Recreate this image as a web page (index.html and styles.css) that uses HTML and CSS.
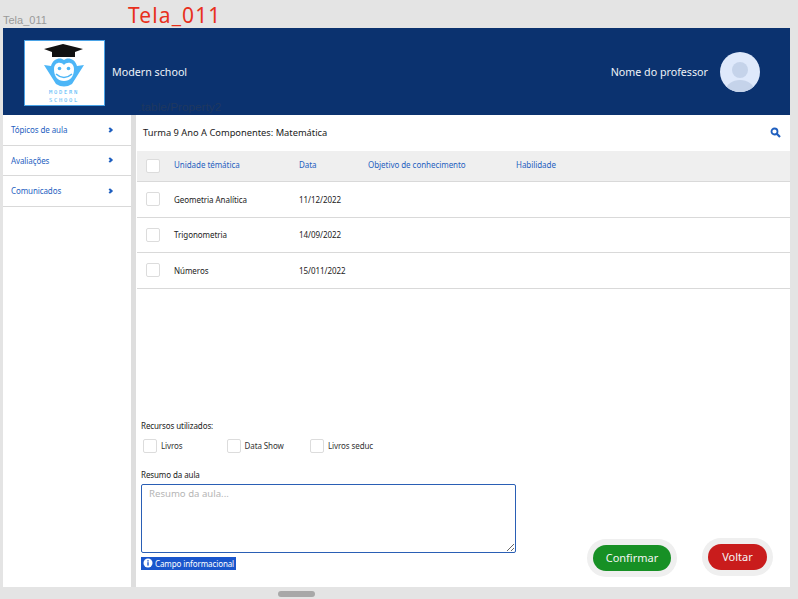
FILE: index.html
```html
<!DOCTYPE html>
<html lang="en">
<head>
  <meta charset="UTF-8" />
  <title>Tela_011</title>
  <link rel="stylesheet" href="styles.css">
</head>
<body>

  <div class="labels">
    <span class="frame-name">Tela_011</span>
    <span class="frame-title">Tela_011</span>
  </div>

  <div class="screen">
    <header class="header">
      <div class="logo">
        <svg width="79" height="64" viewBox="0 0 79 64">
          <polygon points="19,8 38,3 58,8 50,11 50,16 27,16 27,11" fill="#111"/>
          <path d="M19 24 L26 25 C28 17 36 16 39 19 C42 16 50 17 52 25 L59 24 L47 43 Q39 48 31 43 Z" fill="#4db6f7"/>
          <path d="M29 28 C29 21 36 20 39 24 C42 20 49 21 49 28 C49 36 45 40 39 40 C33 40 29 36 29 28 Z" fill="#fff"/>
          <circle cx="34.5" cy="27.5" r="1.8" fill="#4db6f7"/>
          <circle cx="43.5" cy="27.5" r="1.8" fill="#4db6f7"/>
          <path d="M31 33 Q39 40 47 33" fill="none" stroke="#4db6f7" stroke-width="1.6"/>
          <text x="39" y="53" class="logo-text" text-anchor="middle">MODERN</text>
          <text x="39" y="60.5" class="logo-text" text-anchor="middle">SCHOOL</text>
        </svg>
      </div>
      <span class="school">Modern school</span>
      <span class="teacher">Nome do professor</span>
      <svg class="avatar" width="40" height="40" viewBox="0 0 40 40">
        <defs><clipPath id="av"><circle cx="20" cy="20" r="20"/></clipPath></defs>
        <circle cx="20" cy="20" r="20" fill="#dfe9fb"/>
        <g clip-path="url(#av)" fill="#c5d3ea">
          <circle cx="20" cy="18" r="8"/>
          <ellipse cx="20" cy="38" rx="14" ry="10"/>
        </g>
      </svg>
    </header>
    <span class="prop-label">.table/Property2</span>

    <div class="main">
      <nav class="side">
        <a class="side-item">Tópicos de aula <b class="chev"></b></a>
        <a class="side-item">Avaliações <b class="chev"></b></a>
        <a class="side-item">Comunicados <b class="chev"></b></a>
      </nav>

      <section class="content">
        <div class="title-row">
          <span>Turma 9 Ano A Componentes: Matemática</span>
          <svg width="11" height="11" viewBox="0 0 11 11" fill="none" stroke="#1f5fbf">
            <circle cx="4.5" cy="4.5" r="3" stroke-width="1.8"/>
            <line x1="6.8" y1="6.8" x2="10" y2="10" stroke-width="2.2"/>
          </svg>
        </div>

        <div class="row head">
          <i class="check"></i>
          <span class="c1">Unidade témática</span>
          <span class="c2">Data</span>
          <span class="c3">Objetivo de conhecimento</span>
          <span class="c4">Habilidade</span>
        </div>
        <div class="row">
          <i class="check"></i>
          <span class="c1">Geometria Analítica</span>
          <span class="c2">11/12/2022</span>
        </div>
        <div class="row">
          <i class="check"></i>
          <span class="c1">Trigonometria</span>
          <span class="c2">14/09/2022</span>
        </div>
        <div class="row">
          <i class="check"></i>
          <span class="c1">Números</span>
          <span class="c2">15/011/2022</span>
        </div>

        <div class="form">
          <p class="caption">Recursos utilizados:</p>
          <div class="options">
            <label class="option"><i class="check"></i>Livros</label>
            <label class="option"><i class="check"></i>Data Show</label>
            <label class="option"><i class="check"></i>Livros seduc</label>
          </div>
          <p class="caption">Resumo da aula</p>
          <textarea class="summary" placeholder="Resumo da aula..."></textarea>
          <div class="bottom">
            <span class="info">
              <svg width="10" height="10" viewBox="0 0 10 10">
                <circle cx="5" cy="5" r="4.5" fill="#fff"/>
                <rect x="4.3" y="4.2" width="1.4" height="3.4" fill="#1a56cc"/>
                <rect x="4.3" y="2.2" width="1.4" height="1.3" fill="#1a56cc"/>
              </svg>
              Campo informacional
            </span>
            <div class="actions">
              <button class="btn green">Confirmar</button>
              <button class="btn red">Voltar</button>
            </div>
          </div>
        </div>
      </section>
    </div>
  </div>

  <div class="scrollbar"><span class="thumb"></span></div>

</body>
</html>
```

FILE: styles.css
```css
* {
  box-sizing: border-box;
}

body {
  margin: 0;
  height: 599px;
  overflow: hidden;
  background: #e4e4e4;
  font-family: "Noto Sans", sans-serif;
  color: #222;
}

.labels {
  height: 28px;
  display: flex;
  padding-left: 3px;
}

.frame-name {
  width: 125px;
  padding-top: 13px;
  font-family: "Liberation Sans", sans-serif;
  font-size: 11px;
  line-height: 14px;
  color: #9a9a9a;
}

.frame-title {
  font-size: 21px;
  line-height: 28px;
  letter-spacing: 1.1px;
  color: #e8301c;
  margin-top: 1px;
}

.screen {
  position: relative;
  width: 787px;
  height: 559px;
  margin-left: 3px;
  background: #fff;
  display: flex;
  flex-direction: column;
}

.header {
  height: 87px;
  flex: none;
  background: #0b326f;
  display: flex;
  align-items: center;
  padding: 0 30px 0 21px;
  color: #eef2f8;
  font-size: 10.7px;
}

.logo {
  width: 81px;
  height: 66px;
  background: #fff;
  border: 1px solid #4aa3e6;
  margin-top: 2px;
}

.logo svg {
  display: block;
}

.logo-text {
  font-family: "DejaVu Sans Mono", monospace;
  font-size: 5.5px;
  letter-spacing: 1.7px;
  fill: #4db6f7;
}

.school {
  margin-left: 7px;
  flex: 1;
}

.avatar {
  margin-left: 12px;
}

.prop-label {
  position: absolute;
  left: 135px;
  top: 72px;
  font-family: "Liberation Sans", sans-serif;
  font-size: 11.8px;
  color: #1f3860;
}

.main {
  flex: 1;
  display: flex;
  min-height: 0;
}

.side {
  width: 128px;
  flex: none;
}

.side-item {
  height: 30.5px;
  display: flex;
  align-items: center;
  justify-content: space-between;
  padding: 0 19px 0 8px;
  border-bottom: 1px solid #d9d9d9;
  font-size: 8px;
  letter-spacing: -0.1px;
  color: #1f5fbf;
}

.chev {
  width: 4px;
  height: 4px;
  border-top: 2px solid #1f5fbf;
  border-right: 2px solid #1f5fbf;
  transform: rotate(45deg);
}

.content {
  flex: 1;
  display: flex;
  flex-direction: column;
  border-left: 5px solid #dedede;
  padding-left: 1px;
  min-width: 0;
}

.title-row {
  height: 36px;
  display: flex;
  align-items: center;
  justify-content: space-between;
  padding: 0 9px 2px 6px;
  font-size: 9.3px;
  color: #1a1a1a;
}

.row {
  height: 35.5px;
  display: flex;
  align-items: center;
  padding-left: 9px;
  border-bottom: 1px solid #d9d9d9;
  font-size: 8px;
  letter-spacing: -0.05px;
}

.row.head {
  height: 31px;
  background: #efefef;
  color: #1f5fbf;
  padding-bottom: 3px;
}

.head .check {
  margin-top: 3px;
}

.check {
  width: 14px;
  height: 14px;
  flex: none;
  background: #fff;
  border: 1px solid #dcdcdc;
  border-radius: 2px;
}

.c1 {
  margin-left: 14px;
  width: 125px;
}

.c2 {
  width: 69px;
}

.c3 {
  width: 148px;
}

.form {
  flex: 1;
  padding: 131px 0 0 4px;
  display: flex;
  flex-direction: column;
}

.caption {
  margin: 0;
  font-size: 8px;
  letter-spacing: -0.1px;
  line-height: 12px;
}

.options {
  display: flex;
  margin: 7px 0 16px 2px;
}

.option {
  width: 83.5px;
  display: flex;
  align-items: center;
  gap: 4px;
  font-size: 8px;
  letter-spacing: -0.1px;
  color: #333;
}

.summary {
  display: block;
  width: 375px;
  height: 69px;
  margin-top: 3px;
  padding: 2px 7px;
  border: 1.5px solid #2a5fb5;
  border-radius: 2px;
  background: #fff;
  font-family: inherit;
  font-size: 9.6px;
}

.summary::placeholder {
  color: #b5b5b5;
}

.bottom {
  display: flex;
  justify-content: space-between;
  align-items: flex-start;
  padding-right: 23px;
}

.info {
  display: inline-flex;
  align-items: center;
  gap: 2px;
  height: 13px;
  margin-top: 4px;
  padding: 0 2px;
  background: #1a56cc;
  color: #fff;
  font-size: 8px;
  letter-spacing: -0.1px;
}

.actions {
  display: flex;
  gap: 37px;
  margin-top: -8px;
}

.btn {
  height: 26px;
  border: none;
  border-radius: 13px;
  box-shadow: 0 0 0 6px #efefef;
  color: #f4f4f4;
  font-family: inherit;
  font-size: 11px;
  padding: 0;
}

.green {
  width: 78px;
  background: #179025;
}

.red {
  width: 59px;
  background: #c91c1c;
  margin-top: -1px;
}

.scrollbar {
  height: 12px;
  padding: 4px 0 0 278px;
}

.thumb {
  display: block;
  width: 37px;
  height: 6px;
  border-radius: 3px;
  background: #a8a8a8;
}
```
